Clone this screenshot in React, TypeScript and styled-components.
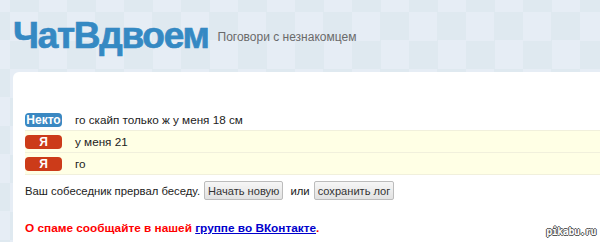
import React from 'react';
import styled, { createGlobalStyle } from 'styled-components';

const GlobalStyle = createGlobalStyle`
  html, body {
    margin: 0;
    padding: 0;
  }
  body {
    width: 600px;
    height: 242px;
    overflow: hidden;
    font-family: "Liberation Sans", Arial, sans-serif;
    background-color: #e6edf5;
    background-image: conic-gradient(#dfe9f0 25%, transparent 0 50%, #dfe9f0 0 75%, transparent 0);
    background-size: 57px 57px;
    background-position: 10px 12px;
  }
`;

const messages = [
  { from: 'stranger', text: 'го скайп только ж у меня 18 см' },
  { from: 'me', text: 'у меня 21' },
  { from: 'me', text: 'го' },
];

export default function App() {
  return (
    <Page>
      <GlobalStyle />
      <Header>
        <Logo>ЧатВдвоем</Logo>
        <Tagline>Поговори с незнакомцем</Tagline>
      </Header>
      <Panel>
        <Log>
          {messages.map((m, i) => (
            <Row key={i} $mine={m.from === 'me'}>
              <Badge $mine={m.from === 'me'}>{m.from === 'me' ? 'Я' : 'Некто'}</Badge>
              <MessageText>{m.text}</MessageText>
            </Row>
          ))}
        </Log>
        <Status>
          Ваш собеседник прервал беседу.
          <Button>Начать новую</Button>
          <Or>или</Or>
          <Button>сохранить лог</Button>
        </Status>
        <Spam>
          О спаме сообщайте в нашей <SpamLink href="#">группе во ВКонтакте</SpamLink>.
        </Spam>
      </Panel>
      <Watermark>pikabu.ru</Watermark>
    </Page>
  );
}

const Page = styled.div`
  position: relative;
  width: 600px;
  height: 242px;
  overflow: hidden;
`;
const Header = styled.header`
  display: flex;
  align-items: flex-start;
  height: 72px;
  padding-left: 13px;
  box-sizing: border-box;
`;
const Logo = styled.h1`
  margin: 14px 0 0;
  font-family: "Liberation Sans", Arial, sans-serif;
  font-weight: bold;
  font-size: 37px;
  line-height: 44px;
  letter-spacing: -1.3px;
  color: #3589c3;
  -webkit-text-stroke: 0.7px #3589c3;
`;
const Tagline = styled.div`
  margin: 28px 0 0 9px;
  font-family: "Liberation Sans", Arial, sans-serif;
  font-size: 12px;
  line-height: 18px;
  color: #6a6a6a;
`;
const Panel = styled.main`
  height: 170px;
  margin-left: 13px;
  padding: 37px 0 0 12px;
  box-sizing: border-box;
  background: #fff;
  border-top-left-radius: 6px;
  font-family: "Liberation Sans", Arial, sans-serif;
  font-size: 12px;
  color: #222;
`;
const Log = styled.div`
  display: flex;
  flex-direction: column;
`;
const Row = styled.div`
  display: flex;
  align-items: center;
  gap: 13px;
  height: 22px;
  box-sizing: border-box;
  border-bottom: 1px solid #f1f0dc;
  background: ${(p) => (p.$mine ? '#ffffe5' : '#fff')};
`;
const Badge = styled.span`
  display: flex;
  align-items: center;
  justify-content: center;
  width: 37px;
  height: 14px;
  border-radius: 4px;
  background: ${(p) => (p.$mine ? '#cc3b19' : '#3a88c2')};
  color: #fff;
  font-weight: bold;
  font-size: 12px;
`;
const MessageText = styled.span`
  font-size: 11.7px;
  color: #222;
`;
const Status = styled.div`
  display: flex;
  align-items: center;
  gap: 4px;
  margin-top: 6px;
  height: 19px;
  font-size: 11.3px;
  color: #222;
`;
const Or = styled.span`
  padding-left: 3px;
`;
const Button = styled.button`
  height: 19px;
  padding: 0 3px;
  border: 1px solid #bcbcbc;
  border-radius: 2px;
  background: linear-gradient(#f6f6f6, #e2e2e2);
  font-family: "Liberation Sans", Arial, sans-serif;
  font-size: 11.1px;
  color: #333;
`;
const Spam = styled.p`
  margin: 21px 0 0;
  font-weight: bold;
  font-size: 11.8px;
  color: #f00;
`;
const SpamLink = styled.a`
  color: #00c;
  text-decoration: underline;
`;
const Watermark = styled.div`
  position: absolute;
  right: 4px;
  bottom: 5px;
  font-family: "DejaVu Sans Mono", monospace;
  font-weight: bold;
  font-size: 10px;
  letter-spacing: -0.5px;
  color: #fff;
  text-shadow: -1px 0 #555, 1px 0 #555, 0 -1px #555, 0 1px #555;
`;
